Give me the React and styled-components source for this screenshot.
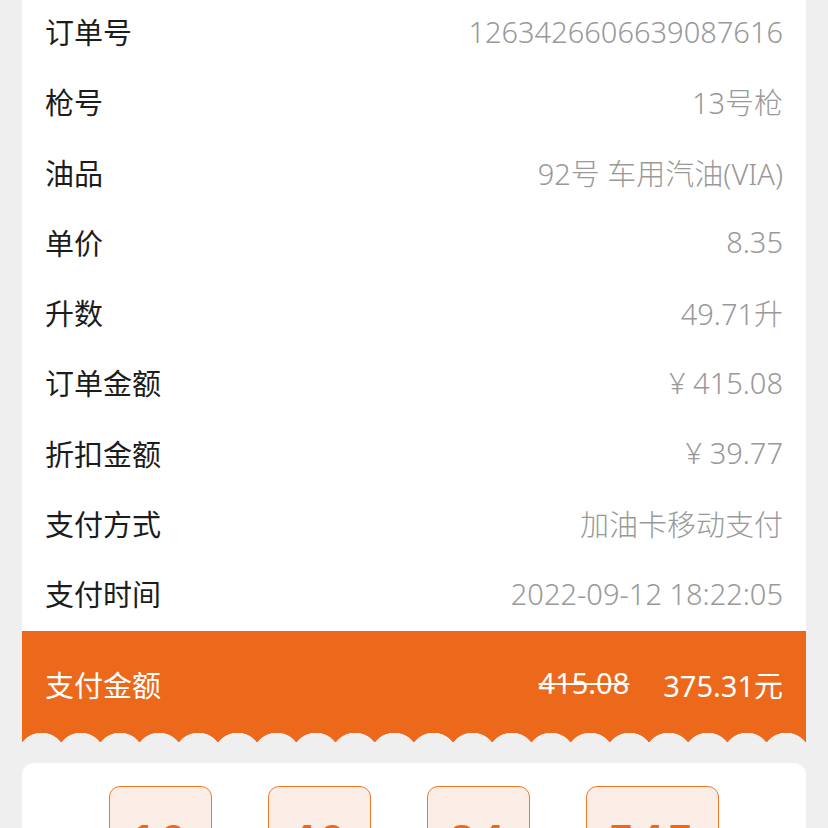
import React from 'react';
import styled, { createGlobalStyle } from 'styled-components';

const GlobalStyle = createGlobalStyle`
    body {
        margin: 0;
        background: #efefef;
        font-family: "Noto Sans", "Noto Sans CJK SC", sans-serif;
    }
`;

const rows = [
    ['订单号', '1263426606639087616'],
    ['枪号', '13号枪'],
    ['油品', '92号 车用汽油(VIA)'],
    ['单价', '8.35'],
    ['升数', '49.71升'],
    ['订单金额', '¥ 415.08'],
    ['折扣金额', '¥ 39.77'],
    ['支付方式', '加油卡移动支付'],
    ['支付时间', '2022-09-12 18:22:05'],
];

const digits = ['10', '40', '24', '545'];

const App = () => {
    return (
        <StyledPage>
            <GlobalStyle />
            <StyledCard>
                {rows.map(([label, value]) => (
                    <StyledRow key={label}>
                        <StyledLabel>{label}</StyledLabel>
                        <StyledValue>{value}</StyledValue>
                    </StyledRow>
                ))}
            </StyledCard>
            <StyledPayBar>
                <StyledPayLabel>支付金额</StyledPayLabel>
                <StyledPayAmount>
                    <StyledOldPrice>415.08</StyledOldPrice>
                    <span>375.31元</span>
                </StyledPayAmount>
            </StyledPayBar>
            <StyledScallop />
            <StyledBottomCard>
                {digits.map((d, i) => (
                    <StyledDigitBox key={i} wide={d.length > 2}>{d}</StyledDigitBox>
                ))}
            </StyledBottomCard>
        </StyledPage>
    );
};

export default App;

const StyledPage = styled.div`
    width: 828px;
    height: 828px;
    overflow: hidden;
    padding: 0 22px;
    box-sizing: border-box;
`;

const StyledCard = styled.div`
    background: #fff;
    display: flex;
    flex-direction: column;
`;

const StyledRow = styled.div`
    height: 70.25px;
    display: flex;
    align-items: center;
    justify-content: space-between;
    padding: 0 23px;
    box-sizing: border-box;
    transform: translateY(-4px);
`;

const StyledLabel = styled.div`
    font-size: 29px;
    color: #1c1c1c;
`;

const StyledValue = styled.div`
    font-size: 29px;
    color: #999;
    font-weight: 300;
`;

const StyledPayBar = styled.div`
    background: #ec691c;
    height: 102px;
    display: flex;
    align-items: center;
    justify-content: space-between;
    padding: 3px 23px 0;
    color: #fff;
    font-size: 29px;
    margin-top: -1px;
    box-sizing: border-box;
`;

const StyledPayLabel = styled.div``;

const StyledPayAmount = styled.div`
    display: flex;
    gap: 34px;
`;

const StyledOldPrice = styled.span`
    text-decoration: line-through;
    text-decoration-thickness: 2px;
`;

const StyledScallop = styled.div`
    height: 10px;
    background-color: #ec691c;
    background-image: radial-gradient(circle at 50% calc(100% + 14px), #efefef 24px, transparent 24.6px);
    background-size: 39.2px 10px;
    background-repeat: repeat-x;
`;

const StyledBottomCard = styled.div`
    margin-top: 20px;
    background: #fff;
    border-radius: 12px 12px 0 0;
    height: 120px;
    display: flex;
    justify-content: center;
    align-items: flex-start;
    gap: 56px;
    padding-top: 23px;
    box-sizing: border-box;
`;

const StyledDigitBox = styled.div`
    width: ${props => props.wide ? '133px' : '103px'};
    height: 100px;
    box-sizing: border-box;
    border: 1px solid #f07a2a;
    border-radius: 11px;
    background: #f9ede5;
    color: #ec691c;
    font-family: "Liberation Sans", Arial, sans-serif;
    font-weight: bold;
    font-size: 46px;
    display: flex;
    justify-content: center;
    padding-top: 27px;
    letter-spacing: 4px;
`;
